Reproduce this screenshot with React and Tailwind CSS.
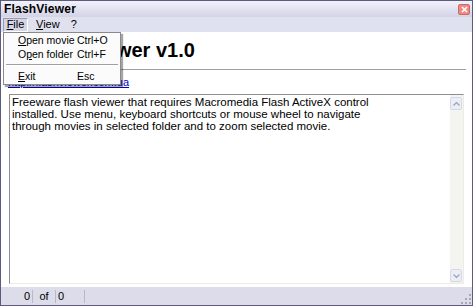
import React from "react";

const font = { fontFamily: '"Liberation Sans", Arial, sans-serif' };

function MenuItem({ label, ul, rest, keys }) {
  return (
    <div className="flex h-[14px] items-center whitespace-nowrap text-[10.5px] leading-none text-black">
      <span className="w-[73px] shrink-0 pl-[14px]">
        {label}
        <span className="underline">{ul}</span>
        {rest}
      </span>
      <span>{keys}</span>
    </div>
  );
}

export default function App() {
  return (
    <div className="h-[306px] w-[473px] bg-[#5b5b82] p-[1px]" style={font}>
      <div className="flex h-full flex-col bg-[#dcdcea]">
        {/* title bar */}
        <div className="flex h-[16px] items-center justify-between bg-gradient-to-b from-[#f2f2fa] to-[#d2d4e6] pl-[3px] pr-[2px]">
          <span className="text-[12px] font-bold leading-none tracking-[0.2px] text-black">FlashViewer</span>
          <div className="flex h-[11px] w-[12px] items-center justify-center rounded-[2px] border border-[#c96a6a] bg-[#ee8a80]">
            <svg width="7" height="7" viewBox="0 0 7 7">
              <path d="M1 1 L6 6 M6 1 L1 6" stroke="#fff" strokeWidth="1.6" />
            </svg>
          </div>
        </div>

        {/* menu bar */}
        <div className="flex h-[15px] items-center gap-[2px] bg-[#e0e1ee] pl-[2px] text-[11px] leading-none text-black">
          <span className="flex h-[14px] w-[25px] items-center justify-center border border-b-white border-l-[#9a9ab0] border-r-white border-t-[#9a9ab0] bg-[#d4d6e6]">
            <span className="underline">F</span>ile
          </span>
          <span className="px-[6px]">
            <span className="underline">V</span>iew
          </span>
          <span className="px-[3px]">?</span>
        </div>

        {/* content */}
        <div className="relative flex flex-1 flex-col bg-white pl-[2px] pr-[2px]">
          <div className="ml-[31px] mt-[6px] h-[30px] text-[20px] font-bold leading-[24px] text-black">
            FlashViewer v1.0
          </div>
          <div className="mx-[4px] mt-[1px] border-t border-[#a0a0a0]" />
          <div className="mt-[6px] h-[18px] pl-[5px] text-[11px] leading-[12px] text-[#0000cc] underline">
            http://flashviewer.com.ua
          </div>
          <div className="mx-[6px] flex h-[190px] border border-[#8e8e8e] border-b-[#ecece4] border-r-[#ecece4]">
            <div className="flex-1 pl-[2px] pt-[1px] text-[11.5px] leading-[12px] text-black">
              Freeware flash viewer that requires Macromedia Flash ActiveX control
              <br />
              installed. Use menu, keyboard shortcuts or mouse wheel to navigate
              <br />
              through movies in selected folder and to zoom selected movie.
            </div>
            <div className="flex w-[13px] flex-col justify-between bg-[#f4f4f0] pb-[1px] pt-[2px]">
              <div className="flex h-[13px] w-[12px] items-center justify-center rounded-[2px] border border-[#d6d8e8] bg-[#eceef6]">
                <svg width="7" height="4" viewBox="0 0 7 4">
                  <path d="M0.5 3.5 L3.5 0.5 L6.5 3.5" stroke="#9aa0b8" strokeWidth="1.2" fill="none" />
                </svg>
              </div>
              <div className="flex h-[13px] w-[12px] items-center justify-center rounded-[2px] border border-[#d6d8e8] bg-[#eceef6]">
                <svg width="7" height="4" viewBox="0 0 7 4">
                  <path d="M0.5 0.5 L3.5 3.5 L6.5 0.5" stroke="#9aa0b8" strokeWidth="1.2" fill="none" />
                </svg>
              </div>
            </div>
          </div>

          {/* File menu dropdown */}
          <div className="absolute left-[2px] top-0 h-[53px] w-[118px] border border-[#8a8a8a] bg-[#fbfbfb] shadow-[2px_2px_1px_rgba(0,0,0,0.35)]">
            <MenuItem label="" ul="O" rest="pen movie" keys="Ctrl+O" />
            <MenuItem label="O" ul="p" rest="en folder" keys="Ctrl+F" />
            <div className="mx-[2px] my-[3px] border-b border-t border-b-white border-t-[#a0a0a0]" />
            <MenuItem label="" ul="E" rest="xit" keys="Esc" />
          </div>
        </div>

        {/* status bar */}
        <div className="flex h-[18px] items-center bg-[#dcdcea] text-[11px] leading-none text-black">
          <span className="w-[31px] pr-[2px] text-right">0</span>
          <span className="h-[13px] border-l border-[#b8b8c8]" />
          <span className="w-[22px] text-center">of</span>
          <span className="h-[13px] border-l border-[#b8b8c8]" />
          <span className="w-[28px] pl-[2px]">0</span>
          <span className="h-[13px] border-l border-[#b8b8c8]" />
          <div className="flex-1" />
          <svg width="11" height="11" viewBox="0 0 11 11" className="mb-[1px] mr-[1px] self-end">
            {[[9, 1], [9, 5], [5, 5], [9, 9], [5, 9], [1, 9]].map(([x, y], i) => (
              <rect key={i} x={x} y={y} width="2" height="2" fill="#a8a8b8" />
            ))}
          </svg>
        </div>
      </div>
    </div>
  );
}
